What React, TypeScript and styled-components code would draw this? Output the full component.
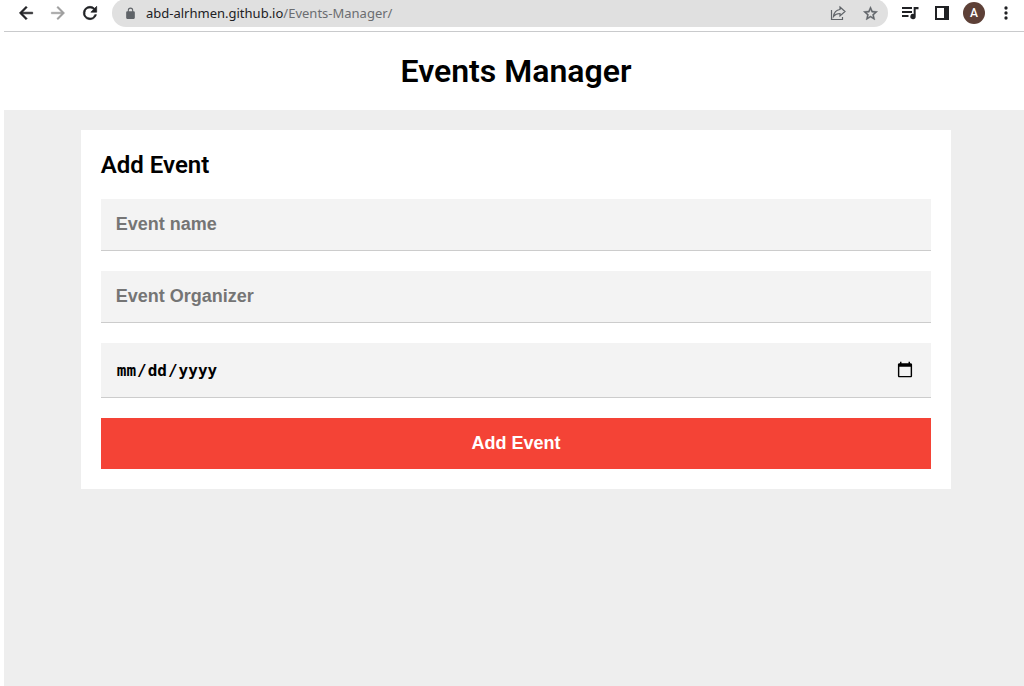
import React from 'react';
import styled, { createGlobalStyle } from 'styled-components';

const GlobalStyle = createGlobalStyle`
  * { box-sizing: border-box; }
  body { margin: 0; background: #fff; font-family: Roboto, sans-serif; color: #000; }
`;

const Frame = styled.div`
  min-height: 100vh;
  padding-left: 4px;
  overflow: hidden;
  display: flex;
  flex-direction: column;
`;

const Toolbar = styled.header`
  height: 32px;
  padding: 0 8px 5px 12px;
  border-bottom: 1px solid #c9cacc;
  display: flex;
  align-items: center;
  gap: 12px;
`;

const IconButton = styled.button<{ $tone?: string }>`
  flex: none;
  width: 20px;
  height: 20px;
  padding: 0;
  border: 0;
  background: none;
  color: ${({ $tone }) => $tone ?? '#202124'};
  display: flex;
  align-items: center;
  justify-content: center;
`;

const AddressBar = styled.div`
  flex: 1;
  height: 28px;
  padding: 0 8px;
  border-radius: 14px;
  background: #e0e0e0;
  display: flex;
  align-items: center;
  gap: 12px;
`;

const Address = styled.div`
  flex: 1;
  display: flex;
  align-items: center;
  gap: 6px;
  font: 13px/20px 'Noto Sans', sans-serif;
  color: #202124;
  white-space: nowrap;
`;

const Path = styled.span`
  color: #6b6d70;
`;

const Avatar = styled.button`
  flex: none;
  width: 22px;
  height: 22px;
  margin: 0 -1px;
  padding: 0;
  border: 0;
  border-radius: 50%;
  background: #5d4037;
  color: #fff;
  font: 500 12px/22px Roboto, sans-serif;
`;

const Site = styled.div`
  flex: 1;
  width: 100vw;
  background: #eee;
`;

const Banner = styled.div`
  padding: 20px;
  background: #fff;
  text-align: center;
`;

const Title = styled.h1`
  margin: 0;
  font-size: 32px;
  line-height: 38px;
  font-weight: 600;
`;

const Card = styled.main`
  width: 85%;
  margin: 20px auto;
  padding: 20px;
  background: #fff;
`;

const Heading = styled.h2`
  margin: 0 0 18px;
  font-size: 24px;
  line-height: 31px;
  font-weight: 600;
`;

const Form = styled.form`
  display: flex;
  flex-direction: column;
  gap: 20px;
`;

const Field = styled.input`
  display: block;
  width: 100%;
  height: 52px;
  padding: 15px;
  border: 0;
  border-bottom: 1px solid #ccc;
  border-radius: 0;
  outline: 0;
  background: #f3f3f3;
  color: #000;
  font: bold 18px/20px 'Liberation Sans', Arial, sans-serif;

  &::placeholder {
    color: #757575;
  }
`;

const DateField = styled(Field)`
  height: 55px;
  font: bold 16px/24px 'DejaVu Sans Mono', monospace;

  &::-webkit-datetime-edit {
    padding-top: 2px;
  }

  &::-webkit-calendar-picker-indicator {
    width: 18px;
    height: 18px;
  }
`;

const Submit = styled.button`
  height: 51px;
  padding: 0 15px 2px;
  border: 0;
  background: #f44336;
  color: #fff;
  font: bold 18px/20px 'Liberation Sans', Arial, sans-serif;
`;

function Icon({ d, size = 20, stroke = 0 }: { d: string; size?: number; stroke?: number }) {
  return (
    <svg
      width={size}
      height={size}
      viewBox="0 0 24 24"
      fill="currentColor"
      stroke={stroke ? 'currentColor' : 'none'}
      strokeWidth={stroke}
      aria-hidden="true"
    >
      <path d={d} />
    </svg>
  );
}

const paths = {
  back: 'M20 11H7.83l5.59-5.59L12 4l-8 8 8 8 1.41-1.41L7.83 13H20v-2z',
  forward: 'M12 4l-1.41 1.41L16.17 11H4v2h12.17l-5.58 5.59L12 20l8-8z',
  reload:
    'M17.65 6.35A7.96 7.96 0 0 0 12 4a8 8 0 1 0 7.73 10h-2.08A6 6 0 1 1 12 6c1.66 0 3.14.69 4.22 1.78L13 11h7V4l-2.35 2.35z',
  lock: 'M18 8h-1V6A5 5 0 0 0 7 6v2H6a2 2 0 0 0-2 2v10c0 1.1.9 2 2 2h12a2 2 0 0 0 2-2V10a2 2 0 0 0-2-2zM9 6a3 3 0 0 1 6 0v2H9V6z',
  star: 'M22 9.24l-7.19-.62L12 2 9.19 8.63 2 9.24l5.46 4.73L5.82 21 12 17.27 18.18 21l-1.63-7.03L22 9.24zM12 15.4l-3.76 2.27 1-4.28-3.32-2.88 4.38-.38L12 6.1l1.71 4.04 4.38.38-3.32 2.88 1 4.28L12 15.4z',
  queue: 'M2.4 4.8h12v2.4h-12zM2.4 9.6h12V12h-12zM2.4 14.4h7.8v2.4H2.4zM16.4 4.8h5.8v2.600h-3.400v8.800a3.200 3.200 0 1 1-2.400-3.100z',
  panel: 'M3.6 3.6h16.8v16.8H3.6zM6 6v12h8.4V6z',
  more: 'M12 8a2 2 0 1 0 0-4 2 2 0 0 0 0 4zm0 2a2 2 0 1 0 0 4 2 2 0 0 0 0-4zm0 6a2 2 0 1 0 0 4 2 2 0 0 0 0-4z',
};

function ShareIcon() {
  return (
    <svg width="18" height="18" viewBox="0 0 18 18" fill="none" stroke="currentColor" strokeWidth="1.2" aria-hidden="true">
      <path d="M2.5 6v9.500h11V13M11 3l5 4.500L11 12V9.500C8 9.500 6 10.500 4.500 12.500 5 8.500 7 6 11 5.500z" />
    </svg>
  );
}

export default function App() {
  return (
    <Frame>
      <GlobalStyle />
      <Toolbar>
        <IconButton aria-label="Back"><Icon d={paths.back} stroke={0.7} /></IconButton>
        <IconButton aria-label="Forward" $tone="#9e9e9e"><Icon d={paths.forward} stroke={0.5} /></IconButton>
        <IconButton aria-label="Reload"><Icon d={paths.reload} stroke={0.8} /></IconButton>
        <AddressBar>
          <Address>
            <IconButton as="span" $tone="#5f6368"><Icon d={paths.lock} size={13} /></IconButton>
            <span>abd-alrhmen.github.io<Path>/Events-Manager/</Path></span>
          </Address>
          <IconButton aria-label="Share" $tone="#5f6368"><ShareIcon /></IconButton>
          <IconButton aria-label="Bookmark" $tone="#5f6368"><Icon d={paths.star} size={17} stroke={0.6} /></IconButton>
        </AddressBar>
        <IconButton aria-label="Media controls"><Icon d={paths.queue} /></IconButton>
        <IconButton aria-label="Side panel"><Icon d={paths.panel} /></IconButton>
        <Avatar aria-label="Profile">A</Avatar>
        <IconButton aria-label="Menu"><Icon d={paths.more} /></IconButton>
      </Toolbar>
      <Site>
        <Banner>
          <Title>Events Manager</Title>
        </Banner>
        <Card>
          <Heading>Add Event</Heading>
          <Form onSubmit={(e) => e.preventDefault()}>
            <Field type="text" placeholder="Event name" aria-label="Event name" />
            <Field type="text" placeholder="Event Organizer" aria-label="Event Organizer" />
            <DateField type="date" aria-label="Event date" />
            <Submit type="submit">Add Event</Submit>
          </Form>
        </Card>
      </Site>
    </Frame>
  );
}
